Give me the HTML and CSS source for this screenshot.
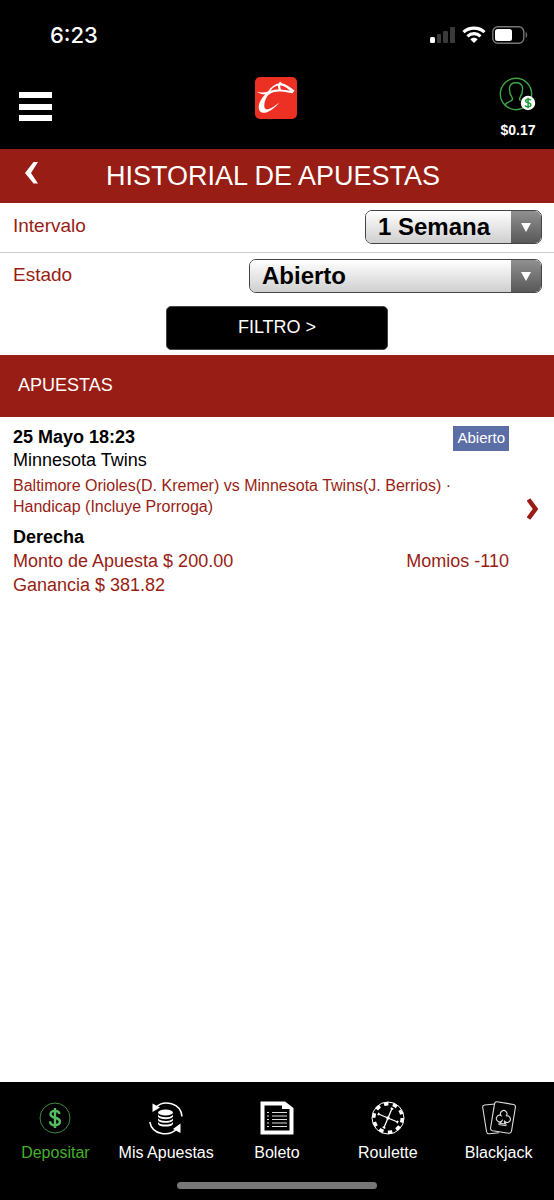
FILE: index.html
```html
<!DOCTYPE html>
<html lang="es">
<head>
<meta charset="utf-8">
<meta name="viewport" content="width=device-width, initial-scale=1">
<title>Historial de apuestas</title>
<link rel="stylesheet" href="styles.css">
</head>
<body>
<div class="app">
  <div class="status">
    <span class="clock">6:23</span>
    <div class="indicators">
      <svg width="26" height="18" viewBox="0 0 26 18" aria-hidden="true">
        <rect x="0" y="11" width="5" height="6" rx="1.5" fill="#fff"/>
        <rect x="7" y="8" width="4" height="9" rx="1" fill="#3a3a3a"/>
        <rect x="13" y="5" width="5" height="12" rx="1" fill="#3a3a3a"/>
        <rect x="20" y="1" width="5" height="16" rx="1" fill="#3a3a3a"/>
      </svg>
      <svg width="24" height="18" viewBox="0 0 24 18" fill="none" stroke="#fff" stroke-width="3.2" aria-hidden="true">
        <path d="M1.500 6.200C7.200 .8 16.800 .8 22.500 6.200"/>
        <path d="M5.500 10.300C9.200 6.800 14.800 6.800 18.500 10.300"/>
        <path d="M8.300 13.200C10.500 11.200 13.500 11.200 15.700 13.200L12 17z" fill="#fff" stroke="none"/>
      </svg>
      <svg width="36" height="18" viewBox="0 0 36 18" aria-hidden="true">
        <rect x=".8" y=".8" width="31" height="16.400" rx="5" fill="none" stroke="#777" stroke-width="1.400"/>
        <rect x="3" y="3" width="17" height="12" rx="2.500" fill="#fff"/>
        <path d="M34 6.500q1.800 2.500 0 5z" fill="#777" stroke="#777" stroke-width=".6"/>
      </svg>
    </div>
  </div>

  <header class="topbar">
    <button class="menu" type="button" aria-label="Menú">
      <svg width="33" height="30" viewBox="0 0 33 30" fill="#fff"><path d="M0 0h33v6H0zM0 12h33v6H0zM0 23h33v6H0z"/></svg>
    </button>
    <a class="logo" href="#" aria-label="Inicio">
      <svg width="42" height="42" viewBox="0 0 42 42">
        <rect width="42" height="42" rx="5" fill="#ed3024"/>
        <path fill="#fff" d="M2 14.500C5 15.800 9 15.800 13 14.500C16 10 20 7 24 6.300L25 4.500L26.800 6.300C31 7.300 35 10 39.500 13.500L37.500 16.300C33 15.800 30 14.700 26 14.500C20.500 14.300 16 15.500 13.500 17.800C10 21.500 8.600 28 9.700 31C11.500 34.500 18 30.500 24.500 25.500C19 32 12 37 6.800 35.600C1.500 33.800 3.200 24 10.300 17.300C7 17.500 3.800 16.500 2 14.500z"/>
        <path fill="#ed3024" d="M15.500 13.800C17.500 11 20 9.300 22.800 8.600L23.500 12.500C20.500 12.500 18 13 15.500 13.800zM25 8.600C28 8.700 30.500 9.800 33 12L35 13.800C31.500 13.200 29 12.600 25.800 12.500z"/>
      </svg>
    </a>
    <a class="account" href="#">
      <svg width="38" height="36" viewBox="0 0 38 36" fill="none" stroke="#3fa447" stroke-width="1.400" aria-hidden="true">
        <circle cx="17" cy="17" r="15.700"/>
        <path d="M6 28C7.500 25.500 10 24.600 12.500 23.500C14 22.500 13.500 21 12.700 19.800C11.200 18 10.300 15 10.500 11C10.800 7.500 13 5.800 17 5.800S23.200 7.500 23.500 11C23.700 15 22.800 18 21.300 19.800C20.500 21 20 22.500 21.500 23.500"/>
        <circle cx="29" cy="26" r="6.500" fill="#fff" stroke="#fff"/>
        <path d="M32 23.200C30.700 21.700 26.600 21.800 26.600 24C26.600 26.400 31.800 25.200 31.800 27.900C31.800 30.200 27.300 30.200 26 28.500M29.100 20.800V31.200" stroke="#1f9b3a" stroke-width="1.500"/>
      </svg>
      <span class="balance">$0.17</span>
    </a>
  </header>

  <div class="titlebar">
    <button class="back" type="button" aria-label="Volver">
      <svg width="14" height="22" viewBox="0 0 14 22" fill="#fff"><path d="M8.500 0H13L6 11L13 21.500H8.500L0 11z"/></svg>
    </button>
    <h1 class="title">HISTORIAL DE APUESTAS</h1>
  </div>

  <main class="content">
    <form class="filters">
      <div class="field">
        <label class="label" for="range">Intervalo</label>
        <span class="picker picker-short">
          <select class="select" id="range"><option>1 Semana</option></select>
          <span class="arrow" aria-hidden="true"></span>
        </span>
      </div>
      <div class="field field-last">
        <label class="label" for="state">Estado</label>
        <span class="picker picker-long">
          <select class="select" id="state"><option>Abierto</option></select>
          <span class="arrow" aria-hidden="true"></span>
        </span>
      </div>
      <button class="submit" type="button">FILTRO &gt;</button>
    </form>

    <h2 class="section">APUESTAS</h2>

    <article class="bet">
      <div class="details">
        <div class="line">
          <strong class="date">25 Mayo 18:23</strong>
          <span class="badge">Abierto</span>
        </div>
        <p class="pick">Minnesota Twins</p>
        <p class="match">Baltimore Orioles(D. Kremer) vs Minnesota Twins(J. Berrios) · Handicap (Incluye Prorroga)</p>
        <strong class="kind">Derecha</strong>
        <div class="line amount"><span>Monto de Apuesta $ 200.00</span><span>Momios -110</span></div>
        <p class="amount">Ganancia $ 381.82</p>
      </div>
      <a class="open" href="#" aria-label="Ver apuesta">
        <svg width="12" height="22" viewBox="0 0 12 22" fill="none" stroke="#9b1c14" stroke-width="4.500"><path d="M1.500 1.500L8.500 11L1.500 20.500"/></svg>
      </a>
    </article>
  </main>

  <footer class="footer">
    <nav class="tabs">
      <a class="tab tab-active" href="#">
        <svg width="34" height="34" viewBox="0 0 34 34" fill="none" aria-hidden="true">
          <circle cx="17" cy="17" r="15" stroke="#3a8a40"/>
          <path d="M21.500 13C21 10.300 18.500 9.900 17 9.900C14.500 9.900 12.500 11 12.500 13.200C12.500 18 21.900 15.500 21.900 20.600C21.900 23 19.500 24.200 17 24.200C14.500 24.200 12.300 23 12 20.300M17 7V27" stroke="#58bd62" stroke-width="2.400"/>
        </svg>
        <span>Depositar</span>
      </a>
      <a class="tab" href="#">
        <svg width="34" height="34" viewBox="0 0 34 34" fill="none" stroke="#fff" aria-hidden="true">
          <path d="M6.500 6.500C15-2 32 2 33 15.500M.8 21C3 33 19 37 28.500 27.500" stroke-width="1.500"/>
          <path d="M3.500 2.500V11L11 6.500zM31.500 22.500V32L24 28z" fill="#fff" stroke="none"/>
          <ellipse cx="16.500" cy="11.500" rx="7.500" ry="3" fill="#fff" stroke="none"/>
          <path d="M9 13.500C10.500 17.200 22.500 17.200 24 13.500V15.500C22.500 19 10.500 19 9 15.500zM9 17.200C10.500 20.900 22.500 20.900 24 17.200V19.200C22.500 22.700 10.500 22.700 9 19.200zM9 20.900C10.500 24.500 22.500 24.500 24 20.900V22.900C22.500 26.400 10.500 26.400 9 22.900z" fill="#fff" stroke="none"/>
        </svg>
        <span>Mis Apuestas</span>
      </a>
      <a class="tab" href="#">
        <svg width="34" height="34" viewBox="0 0 34 34" aria-hidden="true">
          <path fill="#fff" fill-rule="evenodd" d="M.5 .5H25L33.500 7V33.500H.5zM4.500 4.500V29.500H29.500V8H22V4.500z"/>
          <path stroke="#ddd" stroke-width="1.200" d="M12 11.500H27M12 15H27M12 18.500H27M12 22H27M12 25.500H27M7 11.500H9M7 15H9M7 18.500H9M7 22H9M7 25.500H9"/>
        </svg>
        <span>Boleto</span>
      </a>
      <a class="tab" href="#">
        <svg width="34" height="34" viewBox="0 0 34 34" fill="none" stroke="#fff" aria-hidden="true">
          <circle cx="17" cy="17" r="16"/>
          <circle cx="17" cy="17" r="14.200" stroke-width="3.400" stroke-dasharray="4.500 4.422"/>
          <path d="M21 7.500L13 26.500M7.500 13L26.500 21" stroke-width="1.300"/>
          <path d="M19.700 7L22.300 8.200M11.700 26L14.300 27.200M8 11.700L7 14.300M27 19.700L26 22.300" stroke-width="1.500"/>
          <circle cx="17" cy="17" r="1.700" fill="#fff" stroke="none"/>
        </svg>
        <span>Roulette</span>
      </a>
      <a class="tab" href="#">
        <svg width="34" height="34" viewBox="0 0 34 34" fill="none" stroke="#ddd" stroke-width="1.100" aria-hidden="true">
          <path d="M13 3L2.500 4Q.5 4.200 .7 6.300L4.500 30.500Q5 33 7.300 32.800L17 31.700"/>
          <path d="M15 .8L31.500 3.500Q33.800 4 33.400 6.300L29.500 30.200Q29 32.500 26.700 32.200L10.500 29.700Q8.200 29.200 8.600 26.900L12.500 2.800Q13 .6 15 .8z"/>
          <path d="M19 14.500A3.200 3.200 0 1 1 24 15A3.300 3.300 0 1 1 22.500 20.200Q22 21.500 23.700 23L17.500 22.200Q20 21 20.200 19.700A3.300 3.300 0 1 1 19 14.500zM16.500 23.500L24.500 24.700"/>
        </svg>
        <span>Blackjack</span>
      </a>
    </nav>
    <div class="home" aria-hidden="true"></div>
  </footer>
</div>
</body>
</html>
```

FILE: styles.css
```css
* { box-sizing: border-box; }

body {
  margin: 0;
  background: #fff;
  color: #000;
  font-family: "Liberation Sans", Arial, sans-serif;
  font-size: 18px;
  line-height: 24px;
}

h1, h2, p { margin: 0; font-weight: 400; }
a { color: inherit; text-decoration: none; }
button { margin: 0; padding: 0; border: 0; background: none; color: inherit; font: inherit; }
svg { display: block; }

.app { display: flex; flex-direction: column; min-height: 100vh; }

.status {
  display: flex;
  align-items: center;
  justify-content: space-between;
  height: 70px;
  padding: 0 26px 0 50px;
  background: #000;
  color: #fff;
}
.clock { font: 500 22px/28px Inter, sans-serif; }
.indicators { display: flex; align-items: center; gap: 6px; }

.topbar {
  display: grid;
  grid-template-columns: 1fr auto 1fr;
  align-items: start;
  height: 79px;
  padding: 7px 17px 0 19px;
  background: #000;
  color: #fff;
}
.menu { justify-self: start; padding-top: 15px; }
.logo { padding-right: 4px; }
.account { justify-self: end; display: flex; flex-direction: column; align-items: center; gap: 7px; }
.balance { font-weight: 700; font-size: 14px; line-height: 20px; }

.titlebar {
  display: grid;
  grid-template-columns: 60px 1fr 60px;
  align-items: center;
  height: 54px;
  background: #981d14;
  color: #fff;
}
.back { padding: 0 0 6px 25px; }
.title { grid-column: 2; padding-right: 8px; font-size: 27px; line-height: 30px; text-align: center; white-space: nowrap; }

.content { flex: 1; }

.filters { display: flex; flex-direction: column; align-items: center; padding-bottom: 5px; }
.field {
  display: flex;
  align-items: flex-start;
  justify-content: space-between;
  width: 100%;
  height: 50px;
  padding: 7px 12px 0 13px;
  border-bottom: 1px solid #ccc;
}
.field-last { height: 49px; padding-top: 6px; border-bottom: 0; }
.label { padding-top: 4px; color: #981d14; font-size: 19px; }
.picker { position: relative; border: 1px solid #444; border-radius: 7px; overflow: hidden; }
.picker-short { width: 177px; }
.picker-long { width: 293px; }
.select {
  display: block;
  width: 100%;
  height: 32px;
  padding: 0 40px 0 12px;
  border: 0;
  appearance: none;
  background: linear-gradient(#fff, #cfcfcf);
  color: #000;
  font: 700 24px/32px "Liberation Sans", Arial, sans-serif;
}
.arrow {
  position: absolute;
  top: 0;
  right: 0;
  bottom: 0;
  display: grid;
  place-items: center;
  width: 30px;
  background: linear-gradient(#909090, #585858);
  pointer-events: none;
}
.arrow::before {
  content: "";
  border: 5px solid transparent;
  border-top: 9px solid #fff;
  border-bottom: 0;
}
.submit {
  width: 40%;
  height: 44px;
  margin-top: 4px;
  padding-bottom: 2px;
  border: 1px solid #444;
  border-radius: 5px;
  background: #000;
  color: #fff;
}

.section {
  padding: 18px 18px 20px;
  background: #981d14;
  color: #fff;
  font-size: 18px;
}

.bet { display: flex; align-items: center; gap: 18px; padding: 9px 15px 0 13px; }
.details { flex: 1; padding-bottom: 6px; }
.line { display: flex; align-items: flex-start; justify-content: space-between; }
.date { line-height: 23px; }
.badge { height: 25px; margin-bottom: -2px; padding: 0 4px; background: #5b6ea6; color: #fff; font-size: 15px; }
.pick { line-height: 23px; }
.match { padding: 3px 0 8px; color: #981d14; font-size: 16px; line-height: 21px; }
.kind { display: block; }
.amount { color: #981d14; }
.open { padding-bottom: 12px; }

.footer { background: #000; color: #fff; }
.tabs { display: grid; grid-template-columns: repeat(5, 1fr); height: 100px; padding-top: 19px; }
.tab { display: flex; flex-direction: column; align-items: center; gap: 6px; font-size: 16px; }
.tab-active { color: #45b02c; }
.home { width: 36%; height: 7px; margin: 0 auto 11px; border-radius: 4px; background: #777; }
```
